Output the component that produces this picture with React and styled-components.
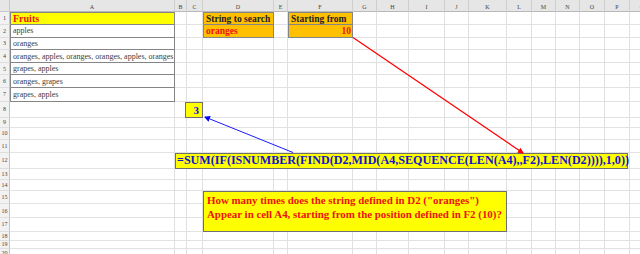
import React from "react";
import styled, { createGlobalStyle } from "styled-components";

const GlobalStyle = createGlobalStyle`
  html, body {
    margin: 0;
    padding: 0;
    background: #ffffff;
    overflow: hidden;
  }
  * {
    box-sizing: border-box;
  }
`;

// column widths and row heights measured off the sheet
const COLS = [
  { id: "A", w: 165 },
  { id: "B", w: 12 },
  { id: "C", w: 16 },
  { id: "D", w: 71 },
  { id: "E", w: 14 },
  { id: "F", w: 65 },
  { id: "G", w: 24 },
  { id: "H", w: 32 },
  { id: "I", w: 36 },
  { id: "J", w: 24 },
  { id: "K", w: 38 },
  { id: "L", w: 25 },
  { id: "M", w: 24 },
  { id: "N", w: 24 },
  { id: "O", w: 25 },
  { id: "P", w: 25 },
  { id: "Q", w: 25 },
];

const ROWS = [
  13, 12.5, 12.5, 13, 12, 13, 13.7, 16, 10, 12.3, 12.7, 16.3, 11, 10.7, 13.8,
  13.5, 13.7, 9.3, 8, 9,
];

const fruits = [
  "apples",
  "oranges",
  "oranges, apples, oranges, oranges, apples, oranges",
  "grapes, apples",
  "oranges, grapes",
  "grapes, apples",
];

const Page = styled.div`
  position: relative;
  width: 640px;
  height: 254px;
  overflow: hidden;
`;

const Sheet = styled.div`
  display: grid;
  grid-template-columns: 10px ${COLS.map((c) => `${c.w}px`).join(" ")};
  grid-template-rows: 12px ${ROWS.map((h) => `${h}px`).join(" ")};
  font-family: "Liberation Serif", "Times New Roman", serif;
`;

const Corner = styled.div`
  grid-column: 1;
  grid-row: 1;
  background: #e6e6e6;
  border-right: 1px solid #c8c8c8;
  border-bottom: 1px solid #c8c8c8;
`;

const ColHead = styled.div`
  grid-column: ${(p) => p.$col};
  grid-row: 1;
  display: flex;
  align-items: center;
  justify-content: center;
  padding-top: 2px;
  background: #e6e6e6;
  border-right: 1px solid #cfcfcf;
  border-bottom: 1px solid #b9b9b9;
  font-size: 6px;
  color: #444;
`;

const RowHead = styled.div`
  grid-column: 1;
  grid-row: ${(p) => p.$row};
  display: flex;
  align-items: center;
  justify-content: center;
  background: #f2f2f2;
  border-right: 1px solid #c4c4c4;
  border-bottom: 1px solid #dedede;
  font-size: 6px;
  color: #444;
`;

const GridCell = styled.div`
  grid-column: ${(p) => p.$col};
  grid-row: ${(p) => p.$row};
  border-right: 1px solid #e0e0e0;
  border-bottom: 1px solid #e2e2e2;
`;

const Value = styled.div`
  grid-column: ${(p) => p.$col} / span ${(p) => p.$span || 1};
  grid-row: ${(p) => p.$row} / span ${(p) => p.$rows || 1};
  display: flex;
  align-items: center;
  justify-content: ${(p) => (p.$align === "right" ? "flex-end" : "flex-start")};
  padding: 0 1px 0 2px;
  background: ${(p) => p.$bg || "#ffffff"};
  color: ${(p) => p.$color || "#404040"};
  font-weight: ${(p) => (p.$bold ? 700 : 400)};
  font-size: ${(p) => p.$size || 8}px;
  white-space: nowrap;
  border: 1px solid #858585;
  border-top: ${(p) => (p.$top ? "1px solid #858585" : "none")};
  z-index: 1;
`;

const ResultBox = styled.div`
  grid-column: 4;
  grid-row: 9;
  margin-left: -2px;
  display: flex;
  align-items: center;
  justify-content: flex-end;
  padding-right: 3px;
  background: #ffff00;
  border: 1px solid #6f6f6f;
  color: #1010d8;
  font-weight: 700;
  font-size: 11px;
  z-index: 1;
`;

const FormulaBox = styled.div`
  grid-column: 3 / span 15;
  grid-row: 13;
  margin-right: 2px;
  display: flex;
  align-items: center;
  padding-left: 1px;
  background: #ffff00;
  border: 1px solid #6f6f6f;
  color: #1212d0;
  font-weight: 700;
  font-size: 12.1px;
  white-space: nowrap;
  z-index: 1;
`;

const NoteBox = styled.div`
  grid-column: 5 / span 8;
  grid-row: 16 / span 3;
  display: flex;
  flex-direction: column;
  padding: 1px 3px;
  background: #ffff00;
  border: 1px solid #6f6f6f;
  color: #ee1111;
  font-weight: 700;
  font-size: 10.9px;
  line-height: 14.5px;
  white-space: nowrap;
  z-index: 1;
`;

const Arrows = styled.svg`
  position: absolute;
  left: 0;
  top: 0;
  pointer-events: none;
  z-index: 2;
`;

export default function App() {
  return (
    <>
      <GlobalStyle />
      <Page>
        <Sheet>
          <Corner />
          {COLS.map((c, i) => (
            <ColHead key={c.id} $col={i + 2}>
              {c.id}
            </ColHead>
          ))}
          {ROWS.map((h, r) => (
            <React.Fragment key={r}>
              <RowHead $row={r + 2}>{r + 1}</RowHead>
              {COLS.map((c, i) => (
                <GridCell key={c.id} $col={i + 2} $row={r + 2} />
              ))}
            </React.Fragment>
          ))}

          <Value $col={2} $row={2} $top $bg="#ffff00" $color="#ee1111" $bold $size={10}>
            Fruits
          </Value>
          {fruits.map((f, i) => (
            <Value key={i} $col={2} $row={i + 3}>
              {f}
            </Value>
          ))}

          <Value $col={5} $row={2} $top $bg="#ffc000" $color="#222" $bold $size={9.5}>
            String to search
          </Value>
          <Value $col={5} $row={3} $bg="#ffc000" $color="#ee1111" $bold $size={9.5}>
            oranges
          </Value>
          <Value $col={7} $row={2} $top $bg="#ffc000" $color="#222" $bold $size={9.5}>
            Starting from
          </Value>
          <Value $col={7} $row={3} $bg="#ffc000" $color="#ee1111" $bold $size={9.5} $align="right">
            10
          </Value>

          <ResultBox>3</ResultBox>

          <FormulaBox>
            =SUM(IF(ISNUMBER(FIND(D2,MID(A4,SEQUENCE(LEN(A4),,F2),LEN(D2)))),1,0))
          </FormulaBox>

          <NoteBox>
            <span>How many times does the string defined in D2 ("oranges")</span>
            <span>Appear in cell A4, starting from the position defined in F2 (10)?</span>
          </NoteBox>
        </Sheet>

        <Arrows width="640" height="254" viewBox="0 0 640 254">
          <defs>
            <marker id="redHead" markerWidth="6" markerHeight="6" refX="5" refY="3" orient="auto" markerUnits="userSpaceOnUse">
              <path d="M0,0 L6,3 L0,6 z" fill="#ff0000" />
            </marker>
            <marker id="blueHead" markerWidth="6" markerHeight="6" refX="5" refY="3" orient="auto" markerUnits="userSpaceOnUse">
              <path d="M0,0 L6,3 L0,6 z" fill="#0000ff" />
            </marker>
          </defs>
          <line x1="353" y1="37.5" x2="523" y2="153" stroke="#ff0000" strokeWidth="1.3" markerEnd="url(#redHead)" />
          <line x1="293" y1="152.5" x2="205" y2="117" stroke="#1a1aff" strokeWidth="1" markerEnd="url(#blueHead)" />
        </Arrows>
      </Page>
    </>
  );
}
